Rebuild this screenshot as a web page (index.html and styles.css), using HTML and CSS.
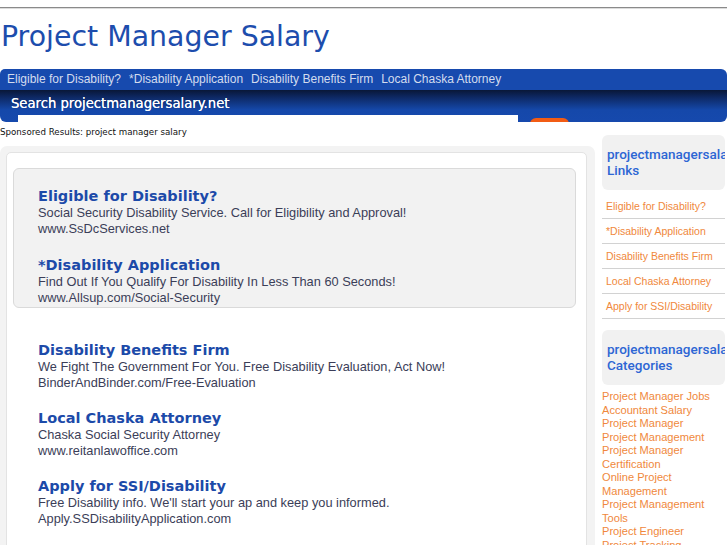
FILE: index.html
```html
<!DOCTYPE html>
<html lang="en">
<head>
  <meta charset="UTF-8">
  <meta name="viewport" content="width=device-width, initial-scale=1.0">
  <title>Project Manager Salary</title>
  <link rel="stylesheet" href="styles.css">
</head>
<body>
  <div class="topline"></div>
  <h1 class="site-title">Project Manager Salary</h1>

  <!-- Top links -->
  <div class="nav">
    <a href="#">Eligible for Disability?</a>
    <a href="#">*Disability Application</a>
    <a href="#">Disability Benefits Firm</a>
    <a href="#">Local Chaska Attorney</a>
  </div>

  <!-- Search -->
  <div class="search">
    <div class="search-title">Search projectmanagersalary.net</div>
    <div class="search-form">
      <input class="search-input" type="text">
      <button class="search-btn">SEARCH</button>
    </div>
  </div>

  <div class="page">
    <div class="main">
      <p class="sponsored">Sponsored Results: project manager salary</p>
      <div class="results-outer">
        <div class="results">
          <div class="top-ads">
            <div class="ad">
              <a class="ad-title" href="#">Eligible for Disability?</a>
              <div class="ad-desc">Social Security Disability Service. Call for Eligibility and Approval!</div>
              <div class="ad-url">www.SsDcServices.net</div>
            </div>
            <div class="ad">
              <a class="ad-title" href="#">*Disability Application</a>
              <div class="ad-desc">Find Out If You Qualify For Disability In Less Than 60 Seconds!</div>
              <div class="ad-url">www.Allsup.com/Social-Security</div>
            </div>
          </div>

          <div class="more-ads">
            <div class="ad">
              <a class="ad-title" href="#">Disability Benefits Firm</a>
              <div class="ad-desc">We Fight The Government For You. Free Disability Evaluation, Act Now!</div>
              <div class="ad-url">BinderAndBinder.com/Free-Evaluation</div>
            </div>
            <div class="ad">
              <a class="ad-title" href="#">Local Chaska Attorney</a>
              <div class="ad-desc">Chaska Social Security Attorney</div>
              <div class="ad-url">www.reitanlawoffice.com</div>
            </div>
            <div class="ad">
              <a class="ad-title" href="#">Apply for SSI/Disability</a>
              <div class="ad-desc">Free Disability info. We'll start your ap and keep you informed.</div>
              <div class="ad-url">Apply.SSDisabilityApplication.com</div>
            </div>
          </div>
        </div>
      </div>
    </div>

    <!-- Sidebar -->
    <div class="sidebar">
      <div class="side-head">projectmanagersalary.net Links</div>
      <ul class="side-links">
        <li><a href="#">Eligible for Disability?</a></li>
        <li><a href="#">*Disability Application</a></li>
        <li><a href="#">Disability Benefits Firm</a></li>
        <li><a href="#">Local Chaska Attorney</a></li>
        <li><a href="#">Apply for SSI/Disability</a></li>
      </ul>
      <div class="side-head">projectmanagersalary.net Categories</div>
      <ul class="categories">
        <li><a href="#">Project Manager Jobs</a></li>
        <li><a href="#">Accountant Salary</a></li>
        <li><a href="#">Project Manager</a></li>
        <li><a href="#">Project Management</a></li>
        <li><a href="#">Project Manager Certification</a></li>
        <li><a href="#">Online Project Management</a></li>
        <li><a href="#">Project Management Tools</a></li>
        <li><a href="#">Project Engineer</a></li>
        <li><a href="#">Project Tracking</a></li>
      </ul>
    </div>
  </div>
</body>
</html>
```

FILE: styles.css
```css
body {
  margin: 0;
  background-color: #fff;
  font-family: "Liberation Sans", Arial, sans-serif;
  overflow: hidden;
}

a {
  text-decoration: none;
}

.topline {
  margin-top: 7px;
  border-top: 1px solid #8a8a8a;
  border-bottom: 1px solid #dcdcdc;
}

.site-title {
  margin: 11px 0 15px 1px;
  font-family: "DejaVu Sans", sans-serif;
  font-size: 28.4px;
  font-weight: normal;
  line-height: 34px;
  color: #1d4dad;
}

.nav {
  height: 21px;
  padding-left: 7px;
  background-color: #174aae;
  border-radius: 5px 6px 0 0;
  display: flex;
  gap: 8px;
  font-size: 12px;
  line-height: 21px;
}

.nav a {
  color: #d3dcee;
}

.search {
  height: 32px;
  overflow: hidden;
  background: linear-gradient(to bottom, #091737 0px, #0e2a68 8px, #1548aa 20px, #1649ad 32px);
  border-radius: 0 0 6px 6px;
}

.search-title {
  padding: 3px 0 0 11px;
  font-family: "DejaVu Sans", sans-serif;
  font-size: 13.2px;
  line-height: 22px;
  color: #fff;
  text-shadow: 0 0 0.4px #fff;
}

.search-form {
  display: flex;
  align-items: flex-start;
}

.search-input {
  margin: 0 0 0 18px;
  width: 500px;
  height: 12px;
  padding: 0;
  border: none;
  background-color: #fff;
}

.search-btn {
  margin: 3px 0 0 12px;
  width: 39px;
  height: 14px;
  padding: 2px 0 0;
  border: none;
  border-radius: 6px;
  background-color: #f25c14;
  color: #fff;
  font-family: "DejaVu Sans", sans-serif;
  font-size: 7px;
  font-weight: bold;
  line-height: 8px;
}

.page {
  display: flex;
  align-items: flex-start;
}

.main {
  width: 595px;
}

.sponsored {
  margin: 4px 0 8px;
  font-family: "DejaVu Sans", sans-serif;
  font-size: 8.7px;
  line-height: 12px;
  color: #111;
}

.results-outer {
  background-color: #f3f3f3;
  border-radius: 7px 7px 0 0;
  padding: 6px 8px 0 6px;
  min-height: 420px;
}

.results {
  background-color: #fff;
  border: 1px solid #e3e3e3;
  border-radius: 5px;
  padding: 15px 10px 40px 6px;
  min-height: 400px;
}

.top-ads {
  background-color: #f2f2f2;
  border: 1px solid #dadada;
  border-radius: 6px;
  padding: 19px 0 1px 24px;
}

.top-ads .ad {
  margin-bottom: 20px;
}

.top-ads .ad:last-child {
  margin-bottom: 0;
}

.more-ads {
  padding: 34px 0 0 25px;
}

.ad {
  margin-bottom: 19px;
}

.ad:last-child {
  margin-bottom: 0;
}

.ad-title {
  display: block;
  font-family: "DejaVu Sans", sans-serif;
  font-size: 14.5px;
  font-weight: bold;
  line-height: 17px;
  color: #1c4aa9;
}

.ad-desc,
.ad-url {
  font-size: 12.8px;
  line-height: 16px;
  color: #3b3e58;
}

.sidebar {
  width: 123px;
  margin-left: 7px;
  padding-top: 13px;
}

.side-head {
  background-color: #f1f1f1;
  border-radius: 6px;
  padding: 11px 0 12px 5px;
  overflow: hidden;
  font-family: Roboto, sans-serif;
  font-size: 13.5px;
  font-weight: 500;
  line-height: 16px;
  color: #2d66d4;
}

.side-links {
  list-style: none;
  margin: 4px 0 11px;
  padding: 0;
}

.side-links li {
  padding: 6px 0 6px 4px;
  border-bottom: 1px solid #d2d2d2;
  font-size: 10.5px;
  line-height: 12px;
}

.side-links a,
.categories a {
  color: #f0883c;
}

.categories {
  list-style: none;
  margin: 5px 0 0;
  padding: 0;
  font-size: 11.1px;
  line-height: 13.5px;
}
```
